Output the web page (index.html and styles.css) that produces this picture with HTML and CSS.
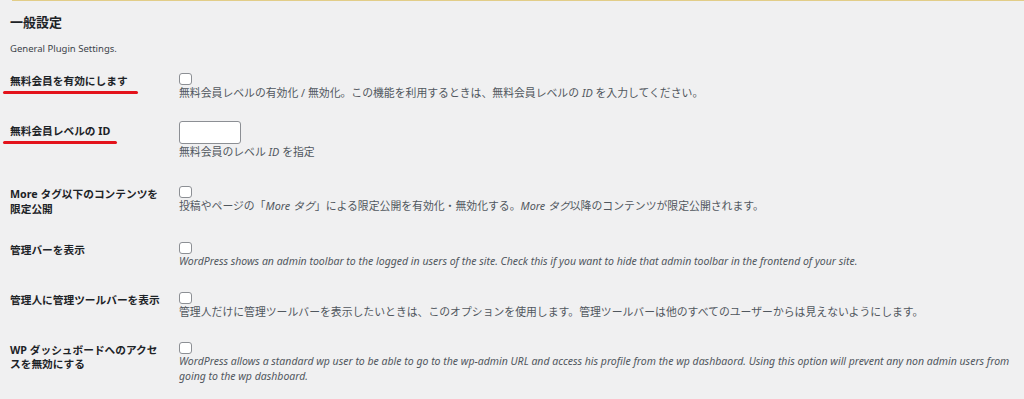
FILE: index.html
```html
<!DOCTYPE html>
<html lang="ja">
<head>
<meta charset="utf-8">
<title>一般設定</title>
<link rel="stylesheet" href="styles.css">
</head>
<body>
<div class="notice-edge"></div>
<div class="wrap">
  <h2 class="title">一般設定</h2>
  <p class="intro">General Plugin Settings.</p>
  <div class="form-table">
    <div class="row">
      <div class="th"><label class="mark mark-1">無料会員を有効にします</label></div>
      <div class="td">
        <input type="checkbox" class="check">
        <p class="description">無料会員レベルの有効化 / 無効化。この機能を利用するときは、無料会員レベルの <em>ID</em> を入力してください。</p>
      </div>
    </div>
    <div class="row">
      <div class="th"><label class="mark mark-2">無料会員レベルの ID</label></div>
      <div class="td td-text">
        <input type="text" class="text-input">
        <p class="description">無料会員のレベル <em>ID</em> を指定</p>
      </div>
    </div>
    <div class="row">
      <div class="th"><label>More タグ以下のコンテンツを<br>限定公開</label></div>
      <div class="td">
        <input type="checkbox" class="check">
        <p class="description">投稿やページの「<em>More タグ</em>」による限定公開を有効化・無効化する。<em>More タグ</em>以降のコンテンツが限定公開されます。</p>
      </div>
    </div>
    <div class="row">
      <div class="th"><label>管理バーを表示</label></div>
      <div class="td">
        <input type="checkbox" class="check">
        <p class="description en">WordPress shows an admin toolbar to the logged in users of the site. Check this if you want to hide that admin toolbar in the frontend of your site.</p>
      </div>
    </div>
    <div class="row">
      <div class="th"><label>管理人に管理ツールバーを表示</label></div>
      <div class="td">
        <input type="checkbox" class="check">
        <p class="description">管理人だけに管理ツールバーを表示したいときは、このオプションを使用します。管理ツールバーは他のすべてのユーザーからは見えないようにします。</p>
      </div>
    </div>
    <div class="row">
      <div class="th"><label>WP ダッシュボードへのアクセ<br>スを無効にする</label></div>
      <div class="td">
        <input type="checkbox" class="check">
        <p class="description en">WordPress allows a standard wp user to be able to go to the wp-admin URL and access his profile from the wp dashbaord. Using this option will prevent any non admin users from going to the wp dashboard.</p>
      </div>
    </div>
  </div>
</div>
</body>
</html>
```

FILE: styles.css
```css
html, body {
  margin: 0;
  padding: 0;
  background: #f0f0f1;
}

body {
  font-family: "Noto Sans", "Noto Sans CJK JP", sans-serif;
  color: #1d2327;
  width: 1024px;
  height: 399px;
  overflow: hidden;
}

.notice-edge {
  margin-left: 12px;
  height: 1px;
  background: #e2cd88;
}

.wrap {
  padding: 0 10px;
}

.title {
  margin: 12px 0 0;
  font-size: 13px;
  line-height: 18px;
  font-weight: 700;
}

.intro {
  margin: 11px 0 0;
  font-size: 9.5px;
  line-height: 14px;
  color: #3c434a;
}

.form-table {
  margin-top: 4.5px;
}

.row {
  display: grid;
  grid-template-columns: 161px 1fr;
}

.th {
  padding: 13.5px 0 13px;
  font-size: 10.7px;
  line-height: 14.5px;
  font-weight: 700;
}

.mark {
  position: relative;
  display: inline-block;
}

.mark::after {
  content: "";
  position: absolute;
  left: -7px;
  bottom: -5px;
  height: 3px;
  border-radius: 2px;
  background: #e3121b;
}

.mark-1::after {
  right: -10px;
}

.mark-2::after {
  right: -7px;
}

.td {
  padding: 10.5px 0 10.5px 8px;
}

.td-text {
  padding-bottom: 14.5px;
}

.check {
  appearance: none;
  -webkit-appearance: none;
  display: block;
  box-sizing: border-box;
  width: 13px;
  height: 12px;
  margin: 2px 0 0;
  border: 1px solid #8c8f94;
  border-radius: 3px;
  background: #fff;
}

.text-input {
  display: block;
  box-sizing: border-box;
  width: 62px;
  height: 23px;
  margin: 0;
  border: 1px solid #8c8f94;
  border-radius: 3px;
  background: #fff;
}

.description {
  margin: 0;
  font-size: 10.85px;
  line-height: 15px;
  color: #50575e;
}

.description.en {
  font-style: italic;
  font-size: 10.5px;
}

.description em {
  font-style: italic;
}
```
